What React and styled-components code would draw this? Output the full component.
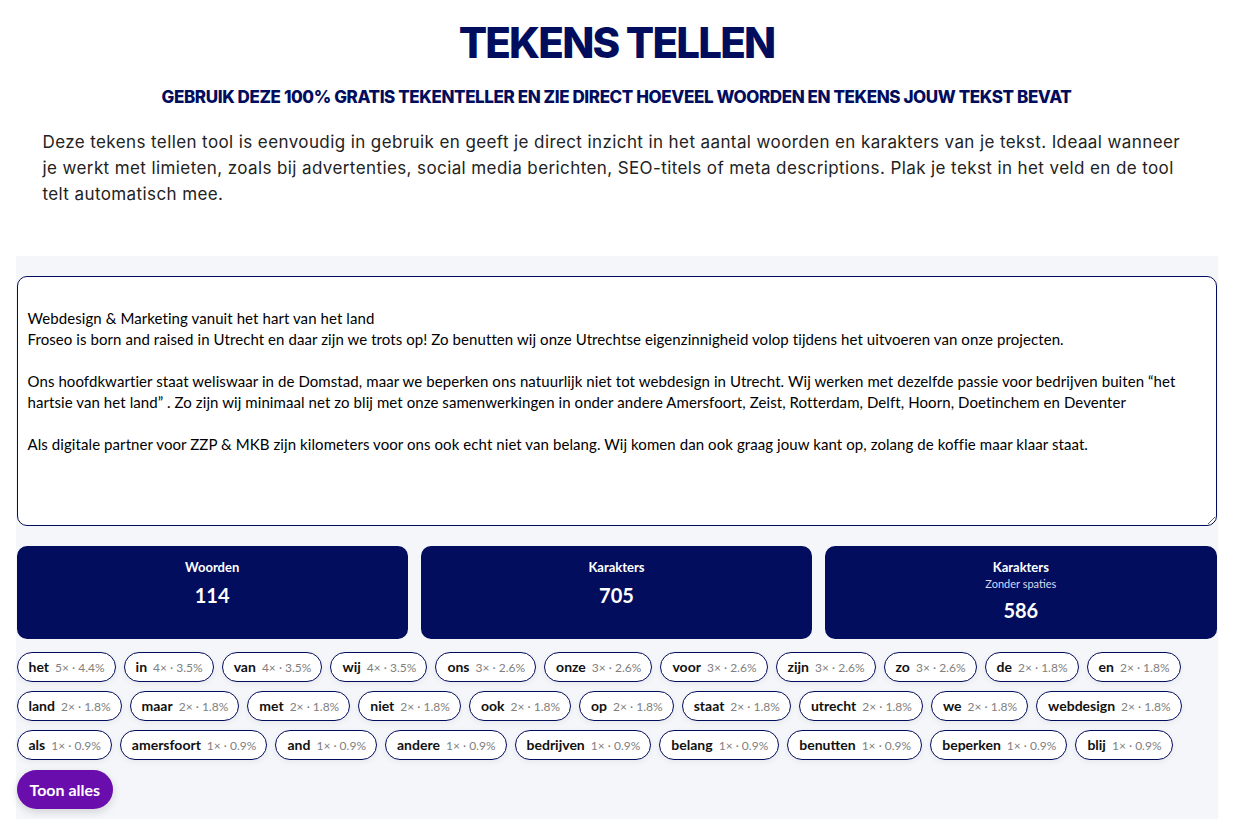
import styled, { createGlobalStyle } from "styled-components";

const NAVY = "#020d5e";

const GlobalStyle = createGlobalStyle`
  * { box-sizing: border-box; }
  body {
    margin: 0;
    background: #ffffff;
    font-family: "Lato", "Noto Sans", sans-serif;
  }
`;

const sampleText = `
Webdesign & Marketing vanuit het hart van het land
Froseo is born and raised in Utrecht en daar zijn we trots op! Zo benutten wij onze Utrechtse eigenzinnigheid volop tijdens het uitvoeren van onze projecten.

Ons hoofdkwartier staat weliswaar in de Domstad, maar we beperken ons natuurlijk niet tot webdesign in Utrecht. Wij werken met dezelfde passie voor bedrijven buiten “het hartsie van het land” . Zo zijn wij minimaal net zo blij met onze samenwerkingen in onder andere Amersfoort, Zeist, Rotterdam, Delft, Hoorn, Doetinchem en Deventer

Als digitale partner voor ZZP & MKB zijn kilometers voor ons ook echt niet van belang. Wij komen dan ook graag jouw kant op, zolang de koffie maar klaar staat.`;

const stats = [
  { label: "Woorden", value: 114 },
  { label: "Karakters", value: 705 },
  { label: "Karakters", sub: "Zonder spaties", value: 586 },
];

const words = [
  ["het", 5, "4.4"], ["in", 4, "3.5"], ["van", 4, "3.5"], ["wij", 4, "3.5"],
  ["ons", 3, "2.6"], ["onze", 3, "2.6"], ["voor", 3, "2.6"], ["zijn", 3, "2.6"],
  ["zo", 3, "2.6"], ["de", 2, "1.8"], ["en", 2, "1.8"], ["land", 2, "1.8"],
  ["maar", 2, "1.8"], ["met", 2, "1.8"], ["niet", 2, "1.8"], ["ook", 2, "1.8"],
  ["op", 2, "1.8"], ["staat", 2, "1.8"], ["utrecht", 2, "1.8"], ["we", 2, "1.8"],
  ["webdesign", 2, "1.8"], ["als", 1, "0.9"], ["amersfoort", 1, "0.9"],
  ["and", 1, "0.9"], ["andere", 1, "0.9"], ["bedrijven", 1, "0.9"],
  ["belang", 1, "0.9"], ["benutten", 1, "0.9"], ["beperken", 1, "0.9"],
  ["blij", 1, "0.9"],
];

const App = () => {
  return (
    <>
      <GlobalStyle />
      <Page>
        <Hero>
          <Title>TEKENS TELLEN</Title>
          <Subtitle>
            GEBRUIK DEZE 100% GRATIS TEKENTELLER EN ZIE DIRECT HOEVEEL WOORDEN EN
            TEKENS JOUW TEKST BEVAT
          </Subtitle>
          <Intro>
            Deze tekens tellen tool is eenvoudig in gebruik en geeft je direct
            inzicht in het aantal woorden en karakters van je tekst. Ideaal
            wanneer je werkt met limieten, zoals bij advertenties, social media
            berichten, SEO-titels of meta descriptions. Plak je tekst in het veld
            en de tool telt automatisch mee.
          </Intro>
        </Hero>

        <Tool>
          <TextArea defaultValue={sampleText} spellCheck={false} />

          <StatGrid>
            {stats.map((s, idx) => (
              <StatCard key={idx}>
                <StatLabel>{s.label}</StatLabel>
                {s.sub && <StatSub>{s.sub}</StatSub>}
                <StatValue>{s.value}</StatValue>
              </StatCard>
            ))}
          </StatGrid>

          <Chips>
            {words.map(([w, n, pct]) => (
              <Chip key={w}>
                <ChipWord>{w}</ChipWord>
                <ChipCount>
                  {n}× · {pct}%
                </ChipCount>
              </Chip>
            ))}
          </Chips>

          <ShowAll>Toon alles</ShowAll>
        </Tool>
      </Page>
    </>
  );
};

const Page = styled.main`
  max-width: 1202px;
  margin: 0 auto;
`;

const Hero = styled.section`
  background: #ffffff;
  padding: 17px 27px 50px;
  text-align: center;
  height: 256px;
`;

const Title = styled.h1`
  margin: 0;
  font-family: "Inter", sans-serif;
  font-weight: 800;
  font-size: 42px;
  line-height: 52px;
  letter-spacing: -1.8px;
  color: ${NAVY};
`;

const Subtitle = styled.h2`
  margin: 17px 0 0;
  font-family: "Inter", sans-serif;
  font-weight: 800;
  font-size: 17px;
  line-height: 22px;
  letter-spacing: -0.4px;
  color: ${NAVY};
`;

const Intro = styled.p`
  margin: 21px 0 0;
  text-align: left;
  font-family: "Inter", sans-serif;
  font-weight: 400;
  font-size: 17px;
  line-height: 26px;
  letter-spacing: 0.4px;
  color: #222222;
`;

const Tool = styled.section`
  background: #f5f6f9;
  padding: 20px 1px 10px;
`;

const TextArea = styled.textarea`
  display: block;
  width: 100%;
  height: 250px;
  padding: 10px;
  border: 1px solid ${NAVY};
  border-radius: 10px;
  background: #ffffff;
  font-family: "Lato", sans-serif;
  font-size: 15px;
  line-height: 21px;
  letter-spacing: 0.08px;
  color: #000000;
  resize: vertical;
  outline: none;
`;

const StatGrid = styled.div`
  display: grid;
  grid-template-columns: repeat(3, 1fr);
  gap: 13px;
  margin-top: 20px;
`;

const StatCard = styled.div`
  background: ${NAVY};
  color: #ffffff;
  border-radius: 10px;
  height: 93px;
  padding-top: 13px;
  display: flex;
  flex-direction: column;
  align-items: center;
`;

const StatLabel = styled.div`
  font-weight: 700;
  font-size: 13px;
  line-height: 17px;
`;

const StatSub = styled.div`
  font-size: 11px;
  line-height: 15px;
  color: #d7daf0;
`;

const StatValue = styled.div`
  margin-top: 7px;
  font-weight: 700;
  font-size: 20px;
  line-height: 24px;
`;

const Chips = styled.div`
  display: flex;
  flex-wrap: wrap;
  gap: 9px 8px;
  margin-top: 13px;
`;

const Chip = styled.span`
  display: inline-flex;
  align-items: baseline;
  gap: 6px;
  height: 30px;
  padding: 5px 10px 0 11px;
  background: #ffffff;
  border: 1px solid ${NAVY};
  border-radius: 15px;
  box-shadow: 0 2px 6px rgba(0, 0, 0, 0.06);
`;

const ChipWord = styled.span`
  font-weight: 700;
  font-size: 14px;
  color: #111111;
`;

const ChipCount = styled.span`
  font-size: 12px;
  color: #808080;
`;

const ShowAll = styled.button`
  display: block;
  margin-top: 10px;
  height: 39px;
  padding: 0 13px;
  border: none;
  border-radius: 20px;
  background: #6a0dad;
  color: #ffffff;
  font-family: "Lato", sans-serif;
  font-weight: 700;
  font-size: 16px;
  box-shadow: 0 3px 8px rgba(0, 0, 0, 0.15);
  cursor: pointer;
`;

export default App;
